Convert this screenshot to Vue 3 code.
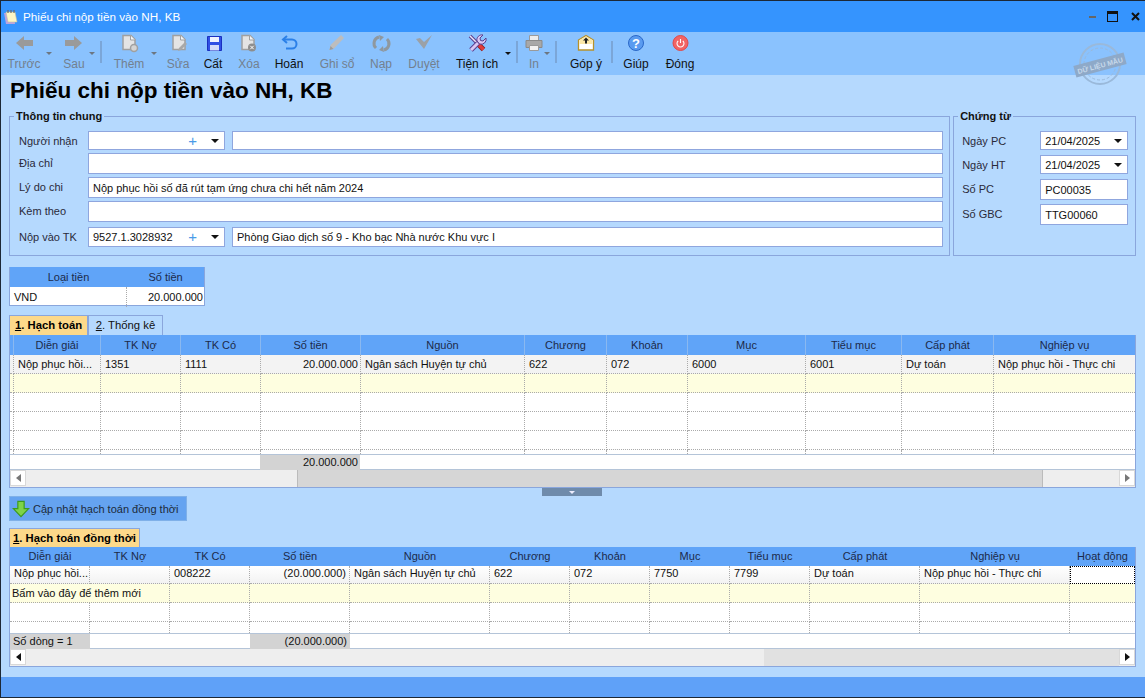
<template>
  <div class="window">
    <div class="titlebar">
      <svg class="app-icon" width="16" height="16" viewBox="0 0 16 16">
        <path d="M1 4l2 11h9l-1-11z" fill="#b9a4e0" />
        <path d="M3 3h9l2 10H5z" fill="#fdf6c4" stroke="#c8bfa0" stroke-width=".6" />
        <path d="M5 1v3M8 1v3M11 1v3" stroke="#6a6a6a" stroke-width="1.2" />
      </svg>
      <span class="title-text">Phiếu chi nộp tiền vào NH, KB</span>
      <div class="win-controls">
        <span class="win-min"></span>
        <span class="win-max"></span>
        <svg class="win-close" width="9" height="9" viewBox="0 0 9 9"><path d="M1 1l7 7M8 1L1 8" stroke="#111" stroke-width="2" /></svg>
      </div>
    </div>

    <div class="toolbar">
      <template v-for="t in tools" :key="t.key">
        <span v-if="t.sep" class="tool-sep" :class="{ wide: t.wide }"></span>
        <span v-else-if="t.caret" class="tool-caret" :class="{ off: t.off, tuck: t.tuck, deep: t.deep }"></span>
        <div v-else class="tool" :class="{ off: t.off }" :style="{ width: t.w + 'px' }">
          <svg class="tool-icon" width="24" height="24" viewBox="0 0 24 24">
            <g v-if="t.icon === 'back'"><path d="M4 11l8-7v4h9v6h-9v4z" fill="#9a9a9a" /></g>
            <g v-if="t.icon === 'next'"><path d="M20 11l-8-7v4H3v6h9v4z" fill="#9a9a9a" /></g>
            <g v-if="t.icon === 'add'">
              <path d="M6 3.5h8l4 4v10H6z" fill="#e4e4e4" stroke="#a0a0a0" stroke-width="1.5" />
              <path d="M13.500 3.500v4.500h4.500" fill="#f6f6f6" stroke="#a0a0a0" />
              <circle cx="17" cy="16" r="3.500" fill="#d4d4d4" stroke="#a0a0a0" stroke-width="1.500" />
            </g>
            <g v-if="t.icon === 'edit'">
              <path d="M7 3.5h8l4 4v10H7z" fill="#e4e4e4" stroke="#a0a0a0" stroke-width="1.5" />
              <path d="M14.500 3.500v4.500h4.500" fill="#f6f6f6" stroke="#a0a0a0" />
              <path d="M12 19l1-3 6-6 2 2-6 6z" fill="#a8a8a8" />
            </g>
            <g v-if="t.icon === 'save'">
              <path d="M6.500 4.500h14v14h-14z" fill="#3050e4" stroke="#1a30c0" />
              <path d="M9 5h9v5H9z" fill="#eef2ff" />
              <path d="M9 13h9v5.500H9z" fill="#d4dcfa" />
            </g>
            <g v-if="t.icon === 'del'">
              <path d="M5 3.500h8l4 4v10H5z" fill="#e4e4e4" stroke="#a0a0a0" stroke-width="1.5" />
              <path d="M12.500 3.500v4.500h4.500" fill="#f6f6f6" stroke="#a0a0a0" />
              <circle cx="15" cy="15.500" r="4" fill="#8d8d8d" />
              <path d="M13.300 13.800l3.400 3.400M16.700 13.800l-3.400 3.400" stroke="#fff" stroke-width="1" />
            </g>
            <g v-if="t.icon === 'undo'">
              <path d="M10 4L6 7.500 10 11" fill="none" stroke="#2b80e8" stroke-width="2" />
              <path d="M6 7.500h9a4.500 4.500 0 0 1 0 9h-6" fill="none" stroke="#2b80e8" stroke-width="2" />
            </g>
            <g v-if="t.icon === 'pen'">
              <path d="M4.500 18l1-5L16 3l3 3L9 16.500z" fill="#bdbdbd" />
              <path d="M4.500 18l1-4 3 3z" fill="#9c9c9c" />
            </g>
            <g v-if="t.icon === 'reload'">
              <path d="M7 16a6.500 6.500 0 0 1 3-11" fill="none" stroke="#8f989f" stroke-width="3" />
              <path d="M18 7a6.500 6.500 0 0 1-3 11" fill="none" stroke="#8f989f" stroke-width="3" />
              <path d="M10 3l5 2-4 4zM15 20l-5-2 4-4z" fill="#8f989f" />
            </g>
            <g v-if="t.icon === 'check'"><path d="M4 7l4-1 4 4 8-7-8 14z" fill="#9ba1a7" /></g>
            <g v-if="t.icon === 'tools'">
              <path d="M5 4l8 8" stroke="#5b3e8e" stroke-width="3.500" />
              <path d="M5 4l8 8" stroke="#eee8f8" stroke-width="1.500" />
              <path d="M13 12l5.500 5.500" stroke="#8a1f1f" stroke-width="5" />
              <path d="M13.500 12.500l5 5" stroke="#e23c3c" stroke-width="3.200" />
              <path d="M6 18L13 11" stroke="#5b3e8e" stroke-width="5" />
              <path d="M6 18L13 11" stroke="#d8c8f4" stroke-width="3" />
              <path d="M12 9a5 5 0 0 1 6-6l-3 3 .5 2.500 2.500.5 3-3a5 5 0 0 1-6.500 6z" fill="#d8c8f4" stroke="#5b3e8e" />
            </g>
            <g v-if="t.icon === 'print'">
              <path d="M7.500 3.500h9v5h-9z" fill="#ececec" stroke="#9a9a9a" />
              <path d="M4 8.500h16v7H4z" fill="#a8a8a8" stroke="#8a8a8a" />
              <path d="M7.500 13.500h9v5h-9z" fill="#f2f2f2" stroke="#9a9a9a" />
            </g>
            <g v-if="t.icon === 'mail'">
              <path d="M4.500 8L12 3.500 19.500 8v10h-15z" fill="#fff" stroke="#b8922a" stroke-width="1.300" />
              <path d="M5.500 8l6.500-3.500L18.500 8v4h-13z" fill="#fce8a8" />
              <path d="M12 5.500l3 3h-2v3h-2v-3H9z" fill="#222" />
            </g>
            <g v-if="t.icon === 'help'">
              <circle cx="12" cy="11" r="7.500" fill="#5a9bf0" stroke="#2a68c8" />
              <text x="12" y="15.500" class="help-mark">?</text>
            </g>
            <g v-if="t.icon === 'power'">
              <circle cx="12.500" cy="11" r="7.500" fill="#f26464" stroke="#e04848" />
              <path d="M10.200 8.800a3.500 3.500 0 1 0 4.600 0" fill="none" stroke="#fff" stroke-width="1.100" />
              <path d="M12.500 7v4" stroke="#fff" stroke-width="1.100" />
            </g>
          </svg>
          <span class="tool-label">{{ t.label }}</span>
        </div>
      </template>
      <svg class="stamp" width="60" height="50" viewBox="0 0 60 50">
        <circle cx="30" cy="24" r="20" fill="none" stroke="#9ab9da" stroke-width="2" />
        <circle cx="30" cy="24" r="16" fill="none" stroke="#9ab9da" stroke-width="1" stroke-dasharray="3 2" />
        <g transform="rotate(-15 30 25)">
          <rect x="4" y="19" width="52" height="12" fill="#8ea9c8" />
          <text x="30" y="28" class="stamp-text">DỮ LIỆU MẪU</text>
        </g>
      </svg>
    </div>

    <div class="content">
      <h1 class="page-title">Phiếu chi nộp tiền vào NH, KB</h1>

      <div class="groups">
        <fieldset class="group group-main">
          <legend>Thông tin chung</legend>
          <div class="frow h19">
            <label>Người nhận</label>
            <div class="combo"><span class="combo-val"></span><span class="plus">+</span><span class="arrow"></span></div>
            <div class="field side"></div>
          </div>
          <div class="frow h21">
            <label>Địa chỉ</label>
            <div class="field"></div>
          </div>
          <div class="frow h21">
            <label>Lý do chi</label>
            <div class="field">Nộp phục hồi số đã rút tạm ứng chưa chi hết năm 2024</div>
          </div>
          <div class="frow h21">
            <label>Kèm theo</label>
            <div class="field"></div>
          </div>
          <div class="frow h20 last">
            <label>Nộp vào TK</label>
            <div class="combo"><span class="combo-val">9527.1.3028932</span><span class="plus">+</span><span class="arrow"></span></div>
            <div class="field side">Phòng Giao dịch số 9 - Kho bạc Nhà nước Khu vực I</div>
          </div>
        </fieldset>

        <fieldset class="group group-doc">
          <legend>Chứng từ</legend>
          <div class="drow"><label>Ngày PC</label><div class="date">21/04/2025<span class="arrow"></span></div></div>
          <div class="drow"><label>Ngày HT</label><div class="date">21/04/2025<span class="arrow"></span></div></div>
          <div class="drow tall"><label>Số PC</label><div class="date plain">PC00035</div></div>
          <div class="drow tall"><label>Số GBC</label><div class="date plain">TTG00060</div></div>
        </fieldset>
      </div>

      <div class="currency">
        <div class="cur-head"><span>Loại tiền</span><span>Số tiền</span></div>
        <div class="cur-row"><span>VND</span><span class="num">20.000.000</span></div>
      </div>

      <div class="tabs">
        <div class="tab active" style="width: 79px"><u>1</u>. Hạch toán</div>
        <div class="tab" style="width: 75px"><u>2</u>. Thống kê</div>
      </div>

      <div class="grid grid-one">
        <div class="grow ghead">
          <span class="pick"></span>
          <span v-for="c in headOne" :key="c">{{ c }}</span>
        </div>
        <div class="grow gdata first">
          <span class="pick"></span>
          <span v-for="(c, i) in rowOne" :key="i" :class="{ num: i === 3 }">{{ c }}</span>
        </div>
        <div class="grow gdata add"><span class="pick"></span><span v-for="c in headOne" :key="c"></span></div>
        <div v-for="n in 3" :key="n" class="grow gdata"><span class="pick"></span><span v-for="c in headOne" :key="c"></span></div>
        <div class="grow gdata cut"><span class="pick"></span><span v-for="c in headOne" :key="c"></span></div>
        <div class="sum sum-one">
          <span></span><span class="gray num">20.000.000</span><span></span>
        </div>
        <div class="hscroll">
          <span class="sb-btn dim"><i class="tri-l"></i></span>
          <span class="sb-track" style="width: 271px"></span>
          <span class="sb-thumb" style="width: 746px"></span>
          <span class="sb-track grow-fill"></span>
          <span class="sb-btn dim"><i class="tri-r"></i></span>
        </div>
      </div>

      <div class="splitter"><i></i></div>

      <div class="update-btn">
        <svg width="18" height="18" viewBox="0 0 20 20">
          <path d="M6.500 1.500h7v8h5L10 18.500 1.500 9.500h5z" fill="#7ed348" stroke="#3d9a1c" stroke-width="1.300" />
        </svg>
        <span>Cập nhật hạch toán đồng thời</span>
      </div>

      <div class="tabs second">
        <div class="tab active" style="width: 131px"><u>1</u>. Hạch toán đồng thời</div>
      </div>

      <div class="grid grid-two">
        <div class="grow ghead">
          <span v-for="c in headTwo" :key="c">{{ c }}</span>
        </div>
        <div class="grow gdata shade">
          <span v-for="(c, i) in rowTwo" :key="i" :class="{ num: i === 3, focus: i === 11 }">{{ c }}</span>
        </div>
        <div class="grow gdata add">
          <span class="hint">Bấm vào đây để thêm mới</span>
          <span v-for="c in headTwo.slice(2)" :key="c"></span>
        </div>
        <div class="grow gdata"><span v-for="c in headTwo" :key="c"></span></div>
        <div class="grow gdata cut"><span v-for="c in headTwo" :key="c"></span></div>
        <div class="sum sum-two">
          <span class="gray">Số dòng = 1</span><span></span><span class="gray num">(20.000.000)</span><span></span>
        </div>
        <div class="hscroll">
          <span class="sb-btn"><i class="tri-l"></i></span>
          <span class="sb-track" style="width: 738px"></span>
          <span class="sb-thumb light grow-fill"></span>
          <span class="sb-btn"><i class="tri-r"></i></span>
        </div>
      </div>
    </div>

    <div class="footer"></div>
  </div>
</template>

<script setup>
const tools = [
  { key: 'prev', label: 'Trước', icon: 'back', w: 40, off: true },
  { key: 'c1', caret: true, off: true },
  { key: 'next', label: 'Sau', icon: 'next', w: 40, off: true },
  { key: 'c2', caret: true, off: true, deep: true },
  { key: 's1', sep: true, wide: true },
  { key: 'add', label: 'Thêm', icon: 'add', w: 40, off: true },
  { key: 'c3', caret: true, off: true },
  { key: 'edit', label: 'Sửa', icon: 'edit', w: 38, off: true },
  { key: 'save', label: 'Cất', icon: 'save', w: 32 },
  { key: 'del', label: 'Xóa', icon: 'del', w: 40, off: true },
  { key: 'undo', label: 'Hoãn', icon: 'undo', w: 40 },
  { key: 'post', label: 'Ghi sổ', icon: 'pen', w: 56, off: true },
  { key: 'load', label: 'Nạp', icon: 'reload', w: 32, off: true },
  { key: 'ok', label: 'Duyệt', icon: 'check', w: 54, off: true },
  { key: 'util', label: 'Tiện ích', icon: 'tools', w: 52 },
  { key: 'c4', caret: true },
  { key: 's2', sep: true },
  { key: 'print', label: 'In', icon: 'print', w: 26, off: true },
  { key: 'c5', caret: true, off: true, tuck: true },
  { key: 's3', sep: true, wide: true },
  { key: 'mail', label: 'Góp ý', icon: 'mail', w: 44 },
  { key: 's4', sep: true },
  { key: 'help', label: 'Giúp', icon: 'help', w: 40 },
  { key: 'close', label: 'Đóng', icon: 'power', w: 48 },
]

const headOne = ['Diễn giải', 'TK Nợ', 'TK Có', 'Số tiền', 'Nguồn', 'Chương', 'Khoản', 'Mục', 'Tiểu mục', 'Cấp phát', 'Nghiệp vụ']
const rowOne = ['Nộp phục hồi...', '1351', '1111', '20.000.000', 'Ngân sách Huyện tự chủ', '622', '072', '6000', '6001', 'Dự toán', 'Nộp phục hồi - Thực chi']
const headTwo = [...headOne, 'Hoạt động']
const rowTwo = ['Nộp phục hồi...', '', '008222', '(20.000.000)', 'Ngân sách Huyện tự chủ', '622', '072', '7750', '7799', 'Dự toán', 'Nộp phục hồi - Thực chi', '']
</script>

<style>
html, body { margin: 0; background: #b5d9fe; }
</style>

<style scoped>
.window {
  width: 1145px;
  height: 698px;
  box-sizing: border-box;
  border: 1px solid #1c2836;
  border-right: none;
  display: flex;
  flex-direction: column;
  font-family: "Liberation Sans", Arial, sans-serif;
  font-size: 11px;
  color: #111;
  overflow: hidden;
  background: #b5d9fe;
}

.titlebar {
  height: 31px;
  flex: none;
  background: #3594fe;
  display: flex;
  align-items: center;
  padding-left: 2px;
  color: #fff;
}
.app-icon { margin-right: 4px; }
.title-text { font-size: 11.7px; }
.win-controls { margin-left: auto; display: flex; align-items: center; }
.win-min { width: 7px; height: 2px; background: #666; margin-right: 11px; }
.win-max { width: 9px; height: 7px; border: 1.5px solid #111; border-top-width: 3px; margin-right: 13px; }
.win-close { margin-right: 5px; }

.toolbar {
  height: 43px;
  flex: none;
  background: #8ac2fe;
  display: flex;
  padding-left: 3px;
  position: relative;
}
.tool {
  display: flex;
  flex-direction: column;
  align-items: center;
  flex: none;
}
.tool-icon { margin-top: 0; flex: none; }
.tool-label { margin-top: 1px; font-size: 12px; line-height: 14px; white-space: nowrap; }
.tool.off .tool-label { color: #73808e; }
.tool-caret {
  flex: none;
  width: 8px;
  height: 3px;
  margin: 20px 1px 0;
  position: relative;
}
.tool-caret::after {
  content: "";
  position: absolute;
  left: 1px;
  top: 0;
  border-left: 3px solid transparent;
  border-right: 3px solid transparent;
  border-top: 3px solid #111;
}
.tool-caret.off::after { border-top-color: #6c7681; }
.tool-caret.tuck { margin-left: -4px; }
.tool-caret.deep { margin-left: -6px; }
.tool-sep {
  flex: none;
  width: 2px;
  height: 22px;
  margin: 9px 3px 0 3px;
  background: #7ba6d8;
}
.tool-sep.wide { margin-right: 7px; }
.help-mark {
  font-size: 13px;
  font-weight: 700;
  fill: #fff;
  text-anchor: middle;
}
.stamp { position: absolute; right: 15px; top: 8px; }
.stamp-text {
  font-size: 7px;
  font-weight: 700;
  fill: #c6d8ea;
  text-anchor: middle;
}

.content { flex: 1; min-height: 0; padding: 0 9px 0 8px; }
.page-title {
  margin: 3px 0 0 1px;
  font-size: 22.5px;
  line-height: 26px;
  font-weight: 700;
  color: #000;
  white-space: nowrap;
}

.groups { display: flex; gap: 3px; margin-top: 5px; }
.group {
  margin: 0;
  border: 1px solid #8aa6dc;
  padding: 0;
  box-sizing: border-box;
  height: 147px;
  min-width: 0;
}
.group legend {
  font-weight: 700;
  font-size: 11px;
  padding: 0 2px;
  line-height: 14px;
  color: #111;
}
.group-main { width: 942px; padding: 8px 6px 0 9px; }
.group-main legend { margin-left: -5px; }
.group-doc { width: 183px; padding: 8px 6px 0 8px; }
.group-doc legend { margin-left: -4px; }

.frow { display: flex; gap: 7px; margin-bottom: 3px; }
.frow.h19 { height: 19px; }
.frow.h21 { height: 21px; }
.frow.h21:nth-child(5) { margin-bottom: 5px; }
.frow.h20 { height: 20px; margin-bottom: 0; }
.frow label { width: 62px; flex: none; line-height: 21px; color: #2a2a3a; white-space: nowrap; }
.field, .combo, .date {
  box-sizing: border-box;
  background: #fff;
  border: 1px solid #8fa6de;
  display: flex;
  align-items: center;
  padding-left: 4px;
  color: #111;
  white-space: nowrap;
}
.field { flex: 1; min-width: 0; }
.combo { width: 137px; flex: none; padding-right: 5px; }
.combo-val { flex: 1; }
.plus { color: #4a9be8; font-size: 15px; line-height: 14px; margin-right: 14px; }
.arrow {
  width: 0;
  height: 0;
  border-left: 4px solid transparent;
  border-right: 4px solid transparent;
  border-top: 4px solid #111;
  flex: none;
}

.drow { display: flex; height: 19px; margin-bottom: 5px; }
.drow.tall { height: 21px; margin-bottom: 4px; }
.drow label { width: 78px; flex: none; line-height: 20px; color: #2a2a3a; white-space: nowrap; }
.date { width: 88px; flex: none; padding-right: 5px; justify-content: space-between; }
.date.plain { justify-content: flex-start; padding-left: 4px; }

.currency {
  width: 196px;
  margin: 11px 0 0;
  box-sizing: border-box;
  border: 1px solid #8aa6dc;
  border-top: none;
}
.cur-head, .cur-row { display: grid; grid-template-columns: 117px 1fr; }
.cur-head { height: 20px; background: #60a4f8; line-height: 20px; text-align: center; color: #1c2a4a; }
.cur-row { height: 18px; background: #fff; line-height: 20px; }
.cur-row span:first-child { padding-left: 4px; border-right: 1px dotted #aaa; }
.cur-row .num { padding-right: 1px; }
.num { text-align: right; padding-right: 2px; }

.tabs { display: flex; margin: 9px 0 0; height: 20px; }
.tabs.second { margin-top: 7px; height: 19px; }
.tab {
  box-sizing: border-box;
  border: 1px solid #8aa6dc;
  border-bottom: none;
  line-height: 18px;
  text-align: center;
  white-space: nowrap;
  font-size: 11.3px;
}
.tab.active { background: #fdd98a; font-weight: 700; color: #000; }

.grid {
  width: 1127px;
  box-sizing: border-box;
  border: 1px solid #8aa6dc;
  border-top: none;
  background: #fff;
}
.grow { display: grid; }
.grid-one .grow { grid-template-columns: 4px 87px 80px 80px 100px 164px 82px 81px 118px 96px 92px 1fr; }
.grid-two .grow { grid-template-columns: 80px 80px 80px 100px 140px 80px 80px 80px 80px 110px 150px 1fr; }
.ghead { height: 20px; background: #60a4f8; line-height: 20px; text-align: center; color: #1c2a4a; }
.grid-one .ghead span { border-right: 1px solid #8ab8f0; }
.grid-one .ghead span:last-child { border-right: none; }
.grid-two .ghead { height: 19px; line-height: 19px; }
.gdata { height: 19px; line-height: 18px; background: #fff; }
.gdata > span {
  box-sizing: border-box;
  border-right: 1px dotted #aaa;
  border-bottom: 1px dotted #aaa;
  padding-left: 4px;
  white-space: nowrap;
  overflow: hidden;
}
.gdata > span.num { padding-left: 0; padding-right: 2px; }
.grid-two .gdata > span.num { padding-right: 3px; }
.grid-two .sum .num { padding-right: 3px; }
.gdata > .pick { padding: 0; }
.gdata > span:last-child { border-right: none; }
.gdata.first { background: #f3f3f3; }
.gdata.add { background: #fefee0; }
.gdata.shade { background: linear-gradient(#fff, #f2f2f2); height: 18px; line-height: 15px; }
.gdata.cut { height: 4px; }
.grid-two .gdata.cut { height: 11px; }
.grid-two .gdata.cut > span { border-bottom: none; }
.grid-one .gdata.cut > span { border-bottom: none; }
.hint { grid-column: span 2; padding-left: 2px !important; line-height: 18px; }
.focus { outline: 1px dotted #000; outline-offset: -1px; background: #fff; border: none !important; }

.sum {
  display: grid;
  height: 16px;
  border-top: 1px solid #b4c4d8;
  border-bottom: 1px solid #b4c4d8;
  line-height: 15px;
  box-sizing: border-box;
  background: #fff;
}
.sum-one { grid-template-columns: 250px 100px 1fr; }
.sum-two { grid-template-columns: 80px 160px 100px 1fr; }
.sum .gray { background: #d3d3d3; }
.sum-two .gray:first-child { padding-left: 3px; }

.hscroll { display: flex; height: 17px; background: #eee; }
.sb-btn {
  width: 16px;
  height: 16px;
  flex: none;
  background: #fff;
  border: 1px solid #d8d8d8;
  box-sizing: border-box;
  display: flex;
  align-items: center;
  justify-content: center;
}
.sb-track { background: #eee; flex: none; }
.sb-thumb { background: #d6d6d6; flex: none; border-left: 1px solid #bbb; border-right: 1px solid #bbb; box-sizing: border-box; }
.sb-thumb.light { background: #e1e1e1; border: none; }
.grow-fill { flex: 1; }
.tri-l, .tri-r { width: 0; height: 0; border-top: 4px solid transparent; border-bottom: 4px solid transparent; }
.tri-l { border-right: 5px solid #111; }
.tri-r { border-left: 5px solid #111; }
.dim .tri-l { border-right-color: #777; }
.dim .tri-r { border-left-color: #777; }

.splitter { height: 8px; margin-left: 533px; width: 60px; background: #6f8bab; display: flex; justify-content: center; align-items: center; }
.splitter i { width: 0; height: 0; border-left: 3px solid transparent; border-right: 3px solid transparent; border-top: 3px solid #eef; }

.update-btn {
  width: 178px;
  height: 25px;
  box-sizing: border-box;
  background: #65a3f0;
  border: 1px solid #7fb0e8;
  display: flex;
  align-items: center;
  gap: 3px;
  padding-left: 2px;
  color: #1c2a3a;
  white-space: nowrap;
}
.update-btn svg { flex: none; }

.footer { height: 20px; flex: none; background: #5fa1f8; }
</style>
